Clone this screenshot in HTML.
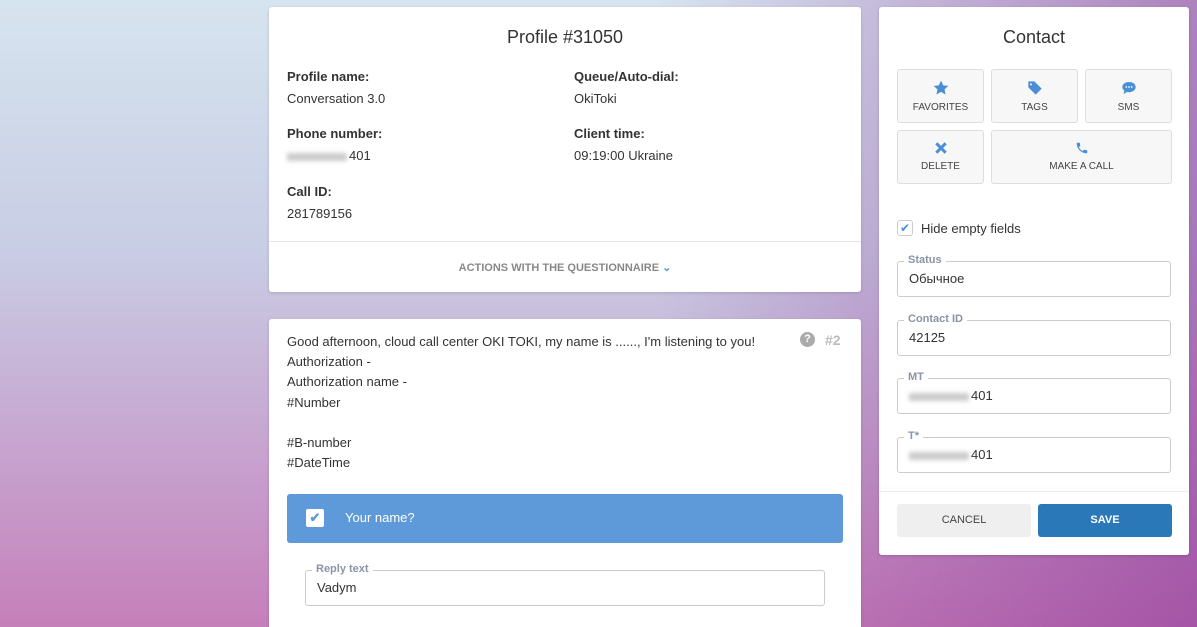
<!DOCTYPE html>
<html><head><meta charset="utf-8"><style>
*{box-sizing:border-box;margin:0;padding:0}
html,body{width:1197px;height:627px;overflow:hidden}
body{position:relative;font-family:"Liberation Sans",sans-serif;color:#333;
background:linear-gradient(90deg,rgba(255,255,255,0) 55%,rgba(140,50,150,.55) 100%),linear-gradient(180deg,#d6e4ef 0%,#c8cde4 40%,#c7a6d0 70%,#c57fb9 100%);}
.card{position:absolute;background:#fff;border-radius:3px;box-shadow:0 1px 3px rgba(0,0,0,.15)}
.lbl{font-size:13px;font-weight:bold;color:#333;position:absolute}
.val{font-size:13px;color:#333;position:absolute}
.blur{display:inline-block;width:60px;height:8px;background:#ccc;filter:blur(2px);vertical-align:middle;margin-right:2px}
.btn{position:absolute;border:1px solid #ddd;border-radius:3px;background:#f7f7f7;font-size:10px;color:#444;text-align:center;height:54px}
.btn svg{display:block;margin:10px auto 6px}
.fld{position:absolute;left:18px;width:274px;height:36px;border:1px solid #ccc;border-radius:3px;font-size:13px;padding:9px 11px}
.fld span.l{position:absolute;top:-8px;left:6px;background:#fff;padding:0 4px;font-size:11px;color:#8a95a5;font-weight:bold}
</style></head><body>
<div class="card" style="left:269px;top:7px;width:592px;height:285px">
 <div style="position:absolute;top:20px;width:100%;text-align:center;font-size:18px;color:#333">Profile #31050</div>
 <div class="lbl" style="left:18px;top:62px">Profile name:</div><div class="val" style="left:18px;top:84px">Conversation 3.0</div>
 <div class="lbl" style="left:305px;top:62px">Queue/Auto-dial:</div><div class="val" style="left:305px;top:84px">OkiToki</div>
 <div class="lbl" style="left:18px;top:119px">Phone number:</div><div class="val" style="left:18px;top:141px"><span class="blur"></span>401</div>
 <div class="lbl" style="left:305px;top:119px">Client time:</div><div class="val" style="left:305px;top:141px">09:19:00 Ukraine</div>
 <div class="lbl" style="left:18px;top:177px">Call ID:</div><div class="val" style="left:18px;top:199px">281789156</div>
 <div style="position:absolute;top:234px;left:0;right:0;border-top:1px solid #e5e5e5"></div>
 <div style="position:absolute;top:254px;width:100%;text-align:center;font-size:11px;font-weight:bold;color:#888">ACTIONS WITH THE QUESTIONNAIRE <span style="color:#5b9bd5">&#8964;</span></div>
</div>
<div class="card" style="left:269px;top:319px;width:592px;height:320px">
 <div style="position:absolute;left:18px;top:13px;font-size:13px;line-height:20.2px">Good afternoon, cloud call center OKI TOKI, my name is ......, I'm listening to you!<br>Authorization -<br>Authorization name -<br>#Number<br><br>#B-number<br>#DateTime</div>
 <div style="position:absolute;left:531px;top:13px;width:15px;height:15px;border-radius:50%;background:#aaa;color:#fff;font-size:11px;font-weight:bold;text-align:center;line-height:15px">?</div>
 <div style="position:absolute;left:556px;top:13px;font-size:14px;font-weight:bold;color:#bbb">#2</div>
 <div style="position:absolute;left:18px;top:175px;width:556px;height:49px;background:#5e9ad9;border-radius:3px">
  <div style="position:absolute;left:19px;top:15px;width:18px;height:18px;background:#fff;border-radius:2px;color:#5e9ad9;font-size:13px;text-align:center;line-height:18px;font-weight:bold">✔</div>
  <div style="position:absolute;left:58px;top:16px;color:#fff;font-size:13px">Your name?</div>
 </div>
 <div class="fld" style="left:36px;top:251px;width:520px;height:36px"><span class="l">Reply text</span>Vadym</div>
</div>
<div class="card" style="left:879px;top:7px;width:310px;height:548px">
 <div style="position:absolute;top:20px;width:100%;text-align:center;font-size:18px">Contact</div>
 <div class="btn" style="left:18px;top:62px;width:87px"><svg width="16" height="16" viewBox="0 0 24 24"><path fill="#4a8fd6" d="M12 1l3.3 7 7.7.9-5.7 5.2 1.6 7.6L12 17.8 5.1 21.7l1.6-7.6L1 8.9 8.7 8z"/></svg>FAVORITES</div>
 <div class="btn" style="left:112px;top:62px;width:87px"><svg width="16" height="16" viewBox="0 0 24 24"><path fill="#4a8fd6" d="M2 2h9l11 11-9 9L2 11zM6 5a1.5 1.5 0 100 3 1.5 1.5 0 000-3z"/></svg>TAGS</div>
 <div class="btn" style="left:206px;top:62px;width:87px"><svg width="16" height="16" viewBox="0 0 24 24"><path fill="#4a8fd6" d="M12 3C6 3 2 6.5 2 10.5c0 2.2 1.2 4 3 5.3L4 21l5-3c1 .2 2 .3 3 .3 6 0 10-3.5 10-7.8S18 3 12 3z"/><circle cx="8" cy="10.5" r="1.3" fill="#fff"/><circle cx="12" cy="10.5" r="1.3" fill="#fff"/><circle cx="16" cy="10.5" r="1.3" fill="#fff"/></svg>SMS</div>
 <div class="btn" style="left:18px;top:123px;width:87px"><svg width="14" height="14" viewBox="0 0 24 24"><path stroke="#4a8fd6" stroke-width="5" d="M4 4l16 16M20 4L4 20"/></svg>DELETE</div>
 <div class="btn" style="left:112px;top:123px;width:181px"><svg width="14" height="14" viewBox="0 0 24 24"><path fill="#4a8fd6" d="M6.6 10.8a15 15 0 006.6 6.6l2.2-2.2c.3-.3.7-.4 1-.2 1.1.4 2.3.6 3.6.6.6 0 1 .4 1 1V20c0 .6-.4 1-1 1A17 17 0 013 4c0-.6.4-1 1-1h3.5c.6 0 1 .4 1 1 0 1.3.2 2.5.6 3.6.1.3 0 .7-.2 1z"/></svg>MAKE A CALL</div>
 <div style="position:absolute;left:18px;top:213px;width:16px;height:16px;border:1px solid #ccc;border-radius:3px;color:#4a8fd6;font-size:12px;text-align:center;line-height:15px">✔</div>
 <div style="position:absolute;left:42px;top:214px;font-size:13px">Hide empty fields</div>
 <div class="fld" style="top:254px"><span class="l">Status</span>Обычное</div>
 <div class="fld" style="top:313px"><span class="l">Contact ID</span>42125</div>
 <div class="fld" style="top:371px"><span class="l">MT</span><span class="blur"></span>401</div>
 <div class="fld" style="top:430px"><span class="l">T*</span><span class="blur"></span>401</div>
 <div style="position:absolute;left:0;right:0;top:484px;border-top:1px solid #eee;box-shadow:0 -3px 4px rgba(0,0,0,.05)"></div>
 <div style="position:absolute;left:18px;top:497px;width:134px;height:33px;background:#efefef;border-radius:3px;font-size:11px;text-align:center;line-height:33px;color:#444">CANCEL</div>
 <div style="position:absolute;left:159px;top:497px;width:134px;height:33px;background:#2a78b8;border-radius:3px;font-size:11px;font-weight:bold;text-align:center;line-height:33px;color:#fff">SAVE</div>
</div>
</body></html>
